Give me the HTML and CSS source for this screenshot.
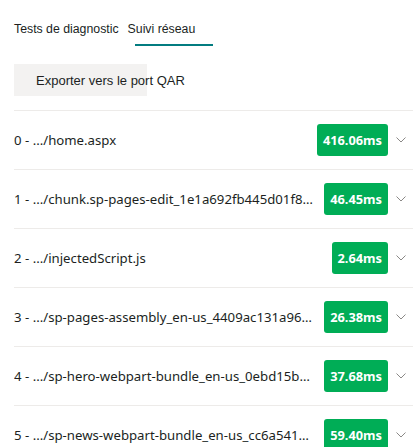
FILE: index.html
```html
<!DOCTYPE html>
<html lang="fr">
<head>
<meta charset="utf-8">
<link rel="stylesheet" href="styles.css">
</head>
<body>
<div class="panel">
  <div class="tabs">
    <span class="tab">Tests de diagnostic</span>
    <span class="tab active">Suivi réseau</span>
  </div>
  <div class="actions">
    <button class="export">Exporter vers le port QAR</button>
  </div>
  <ul class="list">
    <li class="row"><span class="name">0 - .../home.aspx</span><span class="badge">416.06ms</span><span class="chev"><svg width="10" height="6" viewBox="0 0 10 6"><path d="M0.5 0.5 L5 5 L9.5 0.5" fill="none" stroke="#8a8886" stroke-width="1"/></svg></span></li>
    <li class="row"><span class="name">1 - .../chunk.sp-pages-edit_1e1a692fb445d01f8a7c.js</span><span class="badge">46.45ms</span><span class="chev"><svg width="10" height="6" viewBox="0 0 10 6"><path d="M0.5 0.5 L5 5 L9.5 0.5" fill="none" stroke="#8a8886" stroke-width="1"/></svg></span></li>
    <li class="row"><span class="name">2 - .../injectedScript.js</span><span class="badge">2.64ms</span><span class="chev"><svg width="10" height="6" viewBox="0 0 10 6"><path d="M0.5 0.5 L5 5 L9.5 0.5" fill="none" stroke="#8a8886" stroke-width="1"/></svg></span></li>
    <li class="row"><span class="name">3 - .../sp-pages-assembly_en-us_4409ac131a96d2f1.js</span><span class="badge">26.38ms</span><span class="chev"><svg width="10" height="6" viewBox="0 0 10 6"><path d="M0.5 0.5 L5 5 L9.5 0.5" fill="none" stroke="#8a8886" stroke-width="1"/></svg></span></li>
    <li class="row"><span class="name">4 - .../sp-hero-webpart-bundle_en-us_0ebd15b9c3.js</span><span class="badge">37.68ms</span><span class="chev"><svg width="10" height="6" viewBox="0 0 10 6"><path d="M0.5 0.5 L5 5 L9.5 0.5" fill="none" stroke="#8a8886" stroke-width="1"/></svg></span></li>
    <li class="row"><span class="name">5 - .../sp-news-webpart-bundle_en-us_cc6a5412f0.js</span><span class="badge">59.40ms</span><span class="chev"><svg width="10" height="6" viewBox="0 0 10 6"><path d="M0.5 0.5 L5 5 L9.5 0.5" fill="none" stroke="#8a8886" stroke-width="1"/></svg></span></li>
  </ul>
</div>
</body>
</html>
```
FILE: styles.css
```css
html, body {
  margin: 0;
  padding: 0;
  background: #ffffff;
}
body {
  font-family: "Noto Sans", "Open Sans", sans-serif;
  color: #201f1e;
}
.panel {
  padding-left: 14px;
}
.tabs {
  display: flex;
  align-items: center;
  height: 48px;
  padding-top: 12px;
  box-sizing: border-box;
}
.tab {
  font-family: "Liberation Sans", Arial, sans-serif;
  font-size: 12.3px;
  color: #201f1e;
  position: relative;
  line-height: 14px;
  padding-bottom: 2px;
}
.tab.active {
  margin-left: 9px;
  width: 85px;
}
.tab.active::after {
  content: "";
  position: absolute;
  left: 7px;
  right: 0;
  bottom: -8px;
  height: 2px;
  background: #037c80;
}
.actions {
  padding-top: 16px;
  padding-bottom: 14px;
}
.export {
  font-family: "Liberation Sans", Arial, sans-serif;
  font-size: 13px;
  color: #201f1e;
  background: #f3f2f1;
  border: none;
  border-radius: 0;
  width: 133px;
  height: 32px;
  padding: 0 0 0 22px;
  text-align: left;
  white-space: nowrap;
  overflow: visible;
  margin: 0;
}
.list {
  list-style: none;
  margin: 0;
  padding: 0;
}
.row {
  display: flex;
  align-items: center;
  height: 58px;
  border-top: 1px solid #edebe9;
}
.name {
  flex: 1;
  min-width: 0;
  font-size: 13.2px;
  white-space: nowrap;
  overflow: hidden;
  text-overflow: ellipsis;
  padding-right: 9px;
}
.badge {
  flex: none;
  background: #00ad56;
  color: #ffffff;
  font-weight: 700;
  font-size: 12.8px;
  height: 32px;
  line-height: 32px;
  padding: 0 6px;
  border-radius: 3px;
}
.chev {
  flex: none;
  width: 25px;
  display: flex;
  justify-content: center;
  align-items: center;
}
.chev svg {
  display: block;
}
```
